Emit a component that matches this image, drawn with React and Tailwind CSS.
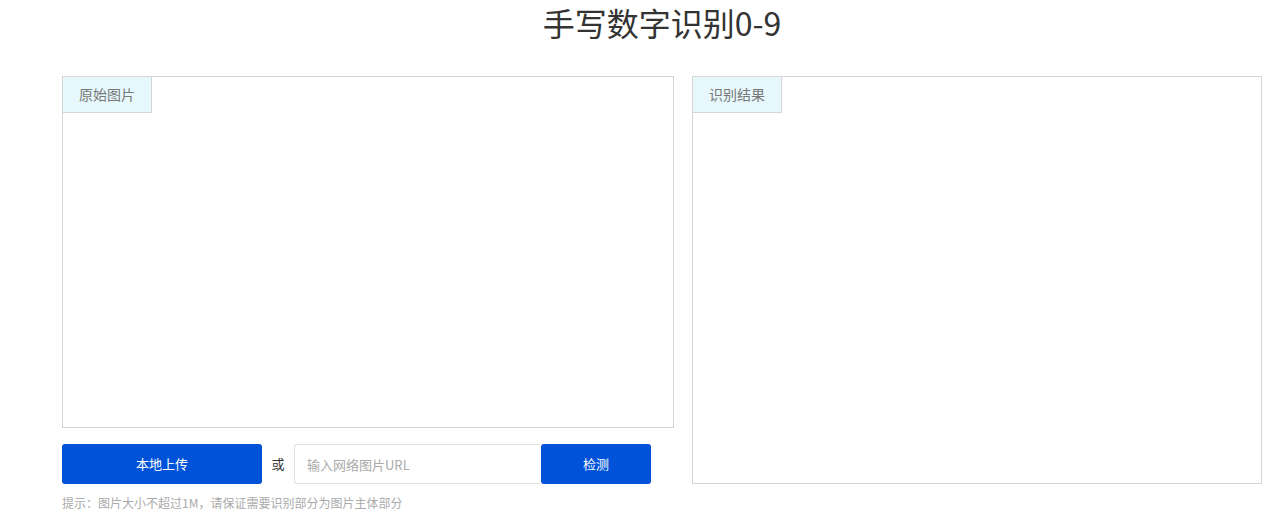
export default function App() {
  return (
    <div className="min-h-screen bg-white font-['Noto_Sans_CJK_SC','Noto_Sans',sans-serif]">
      <div className="w-[1200px] ml-[62px]">
        <h1 className="text-center text-[32px] leading-[44px] text-[#333] h-[76px]">手写数字识别0-9</h1>

        <div className="flex gap-[18px] items-start">
          <section className="w-[612px]">
            <div className="h-[352px] border border-[#d6d6d6]">
              <div className="w-[89px] h-[36px] bg-[#e6f8fc] border-r border-b border-[#d6d6d6] flex items-center justify-center text-[14px] text-[#777]">
                原始图片
              </div>
            </div>

            <div className="flex items-center mt-[16px] h-[40px]">
              <button className="w-[200px] h-[40px] rounded-[3px] bg-[#0052d9] text-white text-[13px]">本地上传</button>
              <span className="w-[32px] text-center text-[13px] text-[#333]">或</span>
              <input
                className="w-[247px] h-[40px] border border-[#e0e0e0] border-r-0 rounded-l-[3px] px-[12px] text-[13px] outline-none placeholder:text-[#aaa]"
                placeholder="输入网络图片URL"
              />
              <button className="w-[110px] h-[40px] rounded-[3px] bg-[#0052d9] text-white text-[13px]">检测</button>
            </div>

            <p className="mt-[10px] text-[12px] leading-[18px] text-[#aaa]">提示：图片大小不超过1M，请保证需要识别部分为图片主体部分</p>
          </section>

          <section className="w-[570px] h-[408px] border border-[#d6d6d6]">
            <div className="w-[89px] h-[36px] bg-[#e6f8fc] border-r border-b border-[#d6d6d6] flex items-center justify-center text-[14px] text-[#777]">
              识别结果
            </div>
          </section>
        </div>
      </div>
    </div>
  );
}
